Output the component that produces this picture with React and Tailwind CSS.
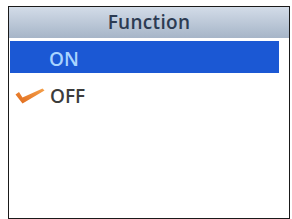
import React from 'react';

const Check = () => (
  <svg width="30" height="16" viewBox="0 0 30 16" className="shrink-0">
    <defs>
      <linearGradient id="chk" x1="0" y1="1" x2="1" y2="0">
        <stop offset="0" stopColor="#e06a1c" />
        <stop offset="1" stopColor="#f4a04a" />
      </linearGradient>
    </defs>
    <path d="M0.5 6.5 L4 4 L7.5 9.5 L27.5 0.5 L29.5 2.5 L7.5 15.5 Z" fill="url(#chk)" />
  </svg>
);

export default function App() {
  return (
    <div className="w-[292px] h-[219px] bg-white pt-[6px] pl-[8px] overflow-hidden" style={{ fontFamily: '"Open Sans", "Liberation Sans", sans-serif' }}>
      <div className="w-[282px] h-[213px] border-[1.5px] border-[#1a1a1a] bg-white flex flex-col">
        <div className="h-[31px] bg-gradient-to-b from-[#d3dce8] to-[#a6b5c8] flex items-center justify-center">
          <span className="text-[19px] font-semibold text-[#2c3b52] tracking-[0.3px] leading-none">Function</span>
        </div>
        <div className="h-[3px] bg-white" />
        <div className="pr-[10px] pl-[1px]">
          <div className="h-[32px] bg-[#1b58d4] flex items-center pl-[39px] pt-[4px]">
            <span className="text-[19px] font-semibold text-[#a9d4ff] leading-none">ON</span>
          </div>
        </div>
        <div className="h-[30px] mt-[8px] flex items-center pl-[6px] gap-[5px]">
          <Check />
          <span className="text-[19px] font-semibold text-[#3c3c3c] leading-none">OFF</span>
        </div>
      </div>
    </div>
  );
}
